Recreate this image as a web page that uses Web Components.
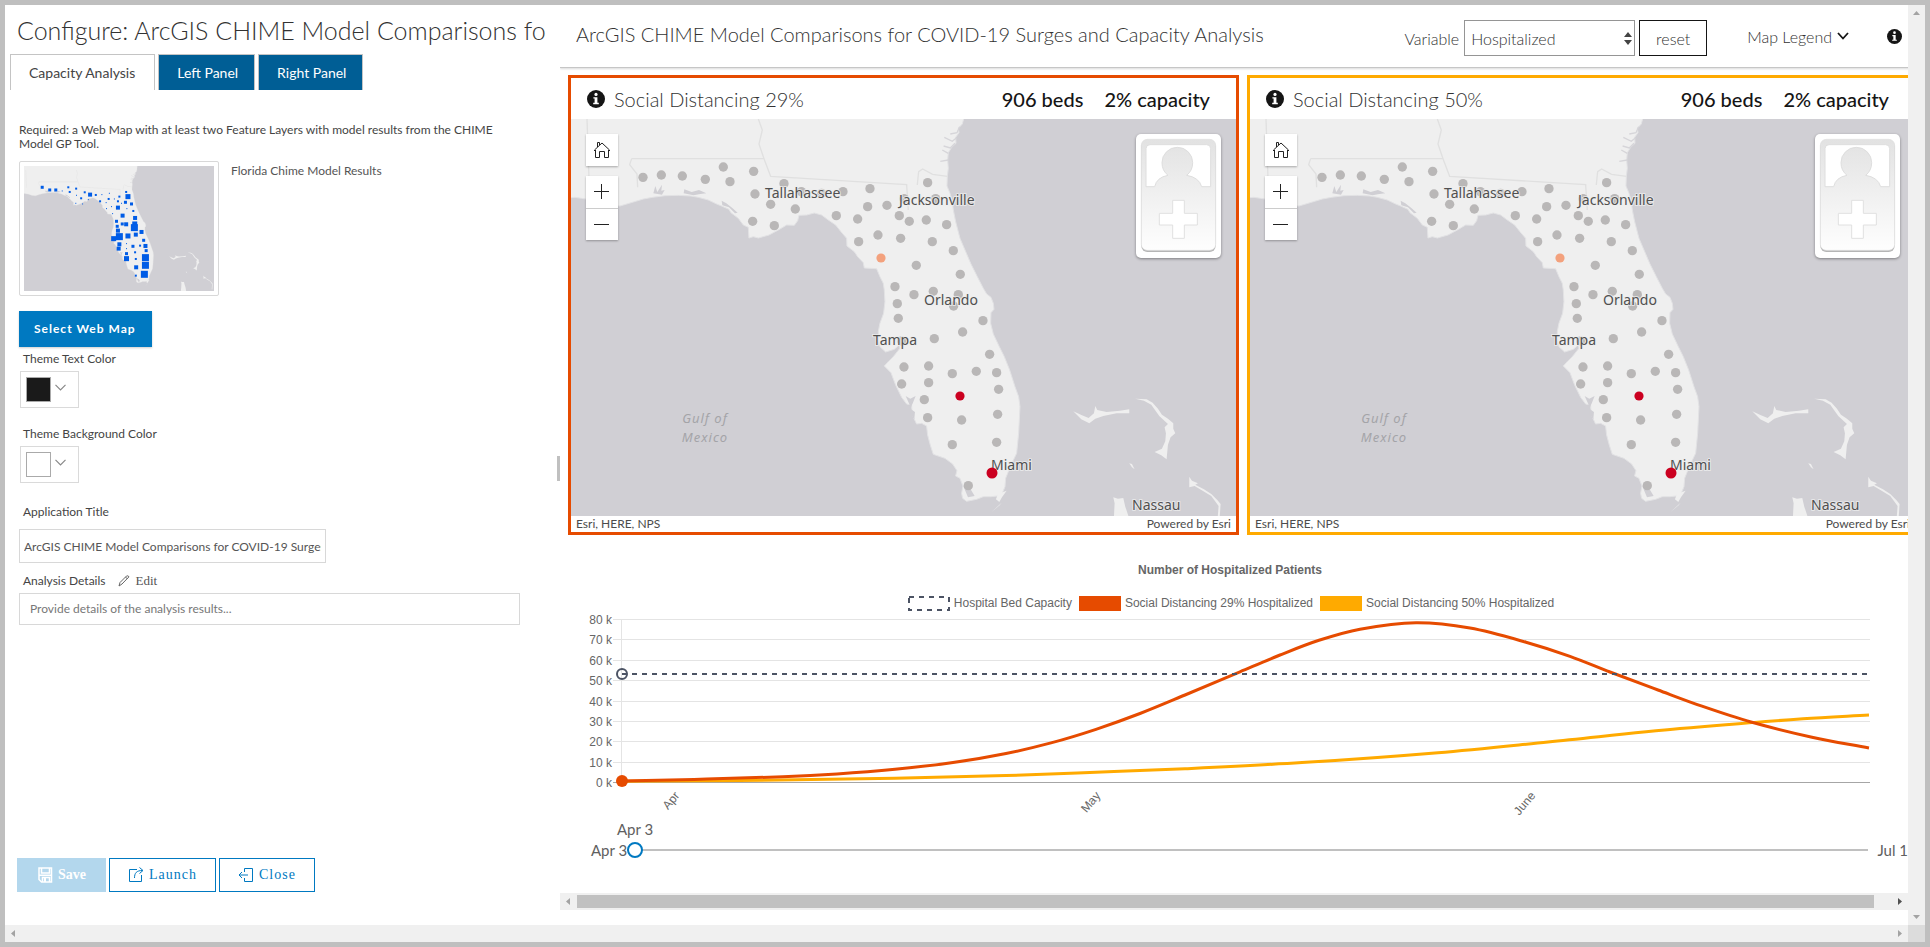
<!DOCTYPE html>
<html lang="en">
<head>
<meta charset="utf-8">
<title>Configure: ArcGIS CHIME Model Comparisons</title>
<style>
html, body { margin: 0; height: 100%; }
body { font-family: Lato, "Open Sans", sans-serif; font-size: 12px; color: #444; background: #bfbfbf; }
</style>
</head>
<body>
<app-window></app-window>
<script>
const define = (name, html, setup) => {
  const tpl = document.createElement('template');
  tpl.innerHTML = `<style>*{box-sizing:border-box}</style>${html}`;
  customElements.define(name, class extends HTMLElement {
    connectedCallback() {
      if (this.shadowRoot) return;
      this.attachShadow({ mode: 'open' }).append(tpl.content.cloneNode(true));
      if (setup) setup(this, this.shadowRoot);
    }
  });
};

/* ---------- small parts ---------- */
define('info-icon', `
<style>:host{display:inline-flex;width:18px;height:18px;color:#151515}svg{width:100%;height:100%}</style>
<svg viewBox="0 0 18 18" aria-hidden="true"><circle cx="9" cy="9" r="9" fill="currentColor"/>
<circle cx="9" cy="4.4" r="1.6" fill="#fff"/><path d="M6.4 7.2h4v5.6h1.4v1.4H6.2v-1.4h1.4V8.6H6.4z" fill="#fff"/></svg>`);

define('scroll-bar', `
<style>
:host{display:flex;align-items:center;justify-content:space-between;height:17px;background:#f0f0f0;color:#a3a3a3}
:host([vertical]){flex-direction:column;width:17px;height:auto}
svg{width:17px;height:17px;flex:none}
.track{flex:1;align-self:stretch;padding:2px 0}
.thumb{display:none;height:100%;width:calc(100% - 17px);background:#c1c1c1}
:host([thumb]) .thumb{display:block}
:host([thumb]) svg:last-of-type{color:#505050}
:host([vertical]) svg{transform:rotate(90deg)}
</style>
<svg viewBox="0 0 17 17"><path d="M10 5v7L6 8.500z" fill="currentColor"/></svg>
<div class="track"><div class="thumb"></div></div>
<svg viewBox="0 0 17 17"><path d="M7 5v7l4-3.500z" fill="currentColor"/></svg>`);

define('panel-tab', `
<style>
:host{display:block}
button{font:14px/18px Lato,sans-serif;height:36px;padding:0 16px 0 18px;border:1px solid #c4c4c4;border-bottom:0;background:#005e95;color:#fff}
:host([selected]) button{background:#fff;color:#444;padding-right:19px}
</style>
<button type="button" role="tab"><slot></slot></button>`);

define('color-field', `
<style>
:host{display:block}
label{display:block;line-height:16px;padding-left:4px}
button{display:flex;align-items:center;gap:4px;width:59px;height:37px;margin:4px 0 0 1px;padding:0 5px;border:1px solid #dadada;background:#fff}
.swatch{width:25px;height:25px;border:1px solid #aaa;background:var(--swatch)}
svg{width:11px;height:7px;margin-bottom:4px}
</style>
<label for="pick"><slot></slot></label>
<button id="pick" type="button"><span class="swatch"></span>
<svg viewBox="0 0 11 7"><path d="M.5.8l5 5 5-5" fill="none" stroke="#888" stroke-width="1.200"/></svg></button>`);

define('action-button', `
<style>
:host{display:block}
button{display:flex;align-items:center;gap:5px;height:34px;padding:0 18px;border:1px solid #0079c1;background:#fff;color:#0079c1;font:14px/18px "Liberation Serif",serif;letter-spacing:1px}
:host([disabled]) button{padding:0 19px;background:#b3d7ed;border-color:#b3d7ed;color:#fff;font-weight:bold;letter-spacing:0}
::slotted(svg){width:16px;height:16px}
</style>
<button type="button"><slot name="icon"></slot><span><slot></slot></span></button>`,
(host, root) => { root.querySelector('button').disabled = host.hasAttribute('disabled'); });

/* ---------- map ---------- */
const COAST = `M-60-80H1205L1200-20 1196 27 1192 42 1180 55 1182 68 1172 82 1173 100 1160 112 1150 128 1148 150 1150 175 1147 200 1146 228
1155 250 1162 275 1165 300 1172 335 1185 385 1200 420 1218 462 1237 500 1255 535 1265 552 1278 562 1285 580 1287 598 1278 608 1277 640
1285 672 1303 710 1318 740 1334 780 1350 830 1361 860 1365 890 1361 970 1355 1030 1338 1065 1322 1105 1320 1130 1312 1150 1298 1158
1278 1160 1255 1160 1235 1168 1205 1174 1193 1165 1190 1150 1194 1128 1185 1105 1172 1098 1176 1082 1163 1062 1140 1045 1105 1033
1096 1005 1088 975 1085 948 1070 940 1055 942 1042 915 1040 885 1025 882 1010 862 992 825 978 788 958 768 970 755 985 740 1005 715
1003 705 988 718 962 726 945 710 940 690 940 665 945 640 956 610 960 575 958 540 955 520 945 500 935 476 898 474 895 458 878 440
868 425 846 408 845 385 828 365 812 345 790 330 770 315 748 309 725 315 702 316 698 332 688 346 665 345 640 360 612 375 580 384
565 380 552 384 550 352 535 345 520 325 498 308 492 298 470 288 455 282 430 270 400 262 378 258 340 256 300 257 262 262 235 267
205 276 165 288 130 285 95 272 50 265 30 262-60 268z`;
const ISLANDS = `M760 904 786 916 806 924 822 910 826 888 832 900 860 906 900 902 928 898 928 910 890 910 850 918 826 926 808 940 784 928z
M946 866 980 868 998 878 1014 896 1026 914 1044 926 1060 940 1060 956 1066 970 1052 982 1044 1004 1040 1048 1024 1036 1004 1026 1026 1016
1036 994 1038 970 1034 952 1044 942 1018 918 994 884 972 872z M928 1060l8 2 8 16-8-6z
M1108 1100l8 12 18 8-8 4 26 14 22 14 18 18 10 12-4 60-6-2 4-52-22-30-26-16-24-14-16 4z
M880 1162l14 4 16-2 6 26 10 30 10 60h-60l6-60 2-40z M560 1142l-14 20-8 14-10-8 6-16z M545 1178l-30 28 24-20z`;
const INLETS = `M265 250l6-22 6 18 14-22-2 18 10-2-8 14zM358 238l22 8 22-6 22 10-18 2-20 4-30-6zM470 272l14 8 18 14 16 14-8 2-18-18-20-6z
M1022 858l14 8 16-8-8 20-8 18 14 10-2 22-10-14-4-30zM1195 1128l22 10 12 20-20 4z`;
const CREEKS = 'M1184 50l-8 18-20 4M1174 84l-12 10-24-12M1170 100l-14 14-20-6M1150 130l-18-10M1150 150l-24 4';
const BORDERS = 'M66 27 72 205M200 146H597L582 102 592 60 580 27M597 146 617 199 1025 224 1030 300M1057 225l4-40 12-8 30 16 45 6M200 146l-6 18 22 28 2 40';
const DOTS = [[234,202],[289,195],[352,198],[421,208],[475,171],[495,215],[566,184],[570,252],[617,283],[563,334],[628,347],[691,297],[657,221],[709,245],[770,250],[834,245],
[915,236],[908,290],[966,286],[814,317],[878,327],[881,395],[939,375],[1003,317],[1033,334],[1007,385],[1084,330],[1145,344],[1102,395],[1165,422],[1088,218],[1017,266],[1112,266],
[1054,466],[1186,493],[990,530],[1047,554],[1105,544],[1180,554],[1166,588],[997,581],[1000,625],[1254,632],[1193,666],[1108,686],[1010,693],[1274,733],[1017,771],[1091,768],[1162,791],
[1234,784],[1295,788],[1010,822],[1091,818],[1301,838],[1078,869],[1088,923],[1190,930],[1298,913],[1162,1004],[1295,997],[1210,1127]];
const SQUARES = [[118,562,3],[139,570,3],[156,570,3],[174,573,1],[191,562,2],[195,576,2],[213,566,2],[214,586,1],[227,595,2],[212,610,1],[231,612,1],[247,599,1],[237,577,2],[252,584,4],[268,585,2],
[285,584,1],[306,580,1],[304,597,2],[320,597,1],[280,604,2],[297,608,1],[298,626,1],[312,620,1],[330,604,2],[330,623,4],[340,610,1],[351,607,3],[368,612,3],[353,576,2],[358,590,5],[334,590,2],
[355,626,1],[373,633,2],[315,641,1],[343,647,4],[378,654,4],[326,664,3],[342,672,3],[353,673,4],[377,672,5],[376,683,7],[328,679,3],[330,692,4],[396,696,4],[380,704,4],[358,708,5],[334,710,7],[318,716,5],
[402,721,3],[334,733,4],[332,746,4],[354,731,1],[372,739,3],[392,737,2],[407,738,4],[354,746,1],[409,752,3],[354,761,3],[378,757,2],[354,776,5],[380,777,2],[407,773,7],[407,796,7],[381,802,4],
[404,823,7],[380,827,2]];
define('florida-map', `
<style>:host{display:block;background:#d0cfd4;overflow:hidden}svg{display:block;width:100%;height:100%}
text{font:14px "Noto Sans",sans-serif;fill:#505050;paint-order:stroke;stroke:#eee;stroke-width:2px;stroke-opacity:.8}
.sea{font-style:italic;font-size:13px;letter-spacing:1px;fill:#a4a4a8;stroke:none;text-anchor:middle}</style>
<svg viewBox="0 0 665 397" preserveAspectRatio="xMidYMid slice" role="img" aria-label="Map of Florida">
<g transform="translate(-6 -9) scale(.3333)">
<path d="${COAST}" fill="#efefef" stroke="#e3e3e5" stroke-width="3"/>
<path d="${INLETS}" fill="#d0cfd4"/><path d="${CREEKS}" fill="none" stroke="#d6d5d9" stroke-width="4"/>
<g transform="translate(765 0)"><path d="${ISLANDS}" fill="#efefef"/></g>
<path d="${BORDERS}" fill="none" stroke="#e0e0e0" stroke-width="4"/>
<g class="dots" fill="#b9b7b7"></g></g>
<g class="labels">
<text x="194" y="79">Tallahassee</text><text x="328" y="86">Jacksonville</text><text x="353" y="186">Orlando</text><text x="302" y="226">Tampa</text>
<text x="420" y="351">Miami</text><text x="561" y="391">Nassau</text>
<text class="sea" x="134" y="304">Gulf of</text><text class="sea" x="134" y="323">Mexico</text></g>
<g class="hot"><circle cx="310" cy="139" r="4.600" fill="#f3a17d"/><circle cx="389" cy="277" r="4.600" fill="#cb0020"/><circle cx="421" cy="354" r="5.500" fill="#cb0020"/></g>
</svg>`, (host, root) => {
  if (host.hasAttribute('thumbnail')) {
    root.querySelector('svg').setAttribute('viewBox', '10 -14 644 424');
    root.querySelector('.labels').remove();
    root.querySelector('.hot').innerHTML = SQUARES.map(([x, y, s]) => {
      const k = 3.39, cx = 10 + (x - 67) / 2.8 * k, cy = -14 + (y - 498) / 3 * k, w = s * k;
      return `<rect x="${cx - w / 2}" y="${cy - w / 2}" width="${w}" height="${w}" fill="#005ce6"/>`;
    }).join('');
  } else {
    root.querySelector('.dots').innerHTML = DOTS.map(([x, y]) => `<circle cx="${x}" cy="${y}" r="14"/>`).join('');
  }
});

define('map-controls', `
<style>
:host{display:flex;flex-direction:column;gap:10px}
div{display:grid;gap:1px;background:#ccc;box-shadow:0 1px 2px rgba(0,0,0,.3)}
button{display:block;width:32px;height:32px;padding:0;border:0;background:#fff}
div button:last-child:not(:first-child){height:31px}
svg{display:block;width:32px;height:32px;fill:none;stroke:#222}
</style>
<div><button type="button" aria-label="Home"><svg viewBox="0 0 32 32"><path d="M8.500 17v-1l7.500-7 7.500 7v1M9.500 16v7.500h4v-6h5v6h4V16M11.500 13V8.500h2v2.500"/></svg></button></div>
<div><button type="button" aria-label="Zoom in"><svg viewBox="0 0 32 32"><path d="M8 15.500h15M15.500 8v15"/></svg></button>
<button type="button" aria-label="Zoom out"><svg viewBox="0 0 32 32"><path d="M8 15.500h15"/></svg></button></div>`);

define('model-panel', `
<style>
:host{display:block;min-width:0;border:3px solid var(--accent);background:#fff}
header{display:flex;align-items:center;height:41px;padding:0 26px 0 16px}
info-icon{margin-right:9px}
h2{flex:1;margin:0;font:300 20px/24px Lato,sans-serif;color:#323232}
b{font:500 20px/24px Lato,sans-serif;color:#151515;margin-left:21px}
.map{position:relative;height:397px}
florida-map{height:100%}
map-controls{position:absolute;left:15px;top:15px}
.card{position:absolute;right:15px;top:15px;width:85px;height:124px;border-radius:5px;background:#fff;box-shadow:0 1px 3px rgba(0,0,0,.4)}
footer{display:flex;justify-content:space-between;height:16px;padding:0 5px;line-height:16px;color:#4c4c4c}
</style>
<header><info-icon></info-icon><h2><slot></slot></h2><b>906 beds</b><b>2% capacity</b></header>
<div class="map"><florida-map></florida-map><map-controls></map-controls>
<svg class="card" viewBox="0 0 255 372"><defs><linearGradient id="g" x2="0" y2="1"><stop stop-color="#e2e2e2"/><stop offset="1" stop-color="#fefefe"/></linearGradient></defs>
<rect x="16" y="20" width="223" height="334" rx="18" fill="#b5b5b5"/><rect x="16" y="16" width="223" height="333" rx="18" fill="url(#g)" stroke="#e0e0e0" stroke-width="2"/>
<path d="M30 158V44q0-12 12-12h170q12 0 12 12v114h-27q-8-28-45-34 18-14 18-38a46 46 0 0 0-92 0q0 24 18 38-34 6-40 34z" fill="#fff" stroke="#dedede" stroke-width="3"/>
<path d="M110 199h35v39h39v35h-39v40h-35v-40H70v-35h40z" fill="#fff" stroke="#e0e0e0" stroke-width="3"/></svg></div>
<footer><span>Esri, HERE, NPS</span><span>Powered by Esri</span></footer>`);

/* ---------- chart ---------- */
const HIGH = [[62,171],[134,169.4],[223,166.8],[277,164],[335,159.3],[393,152.6],[446,143.5],[491,132.9],[536,119.3],[580,103.5],[625,85],[680,61.8],[720,45],[759,30.3],[800,19.2],[856,12.8],[910,18.1],[966,32.2],[1010,46.3],[1050,62],[1098,80],[1142,96.2],[1191,112],[1252,127.2],[1309,138]];
const LOW = [[62,171.3],[179,170.6],[335,168.3],[446,165.6],[536,162.3],[625,158.7],[742,152.6],[878,142.7],[988,132],[1120,118.6],[1243,108.8],[1309,105]];
/* Smooth curve through the points, with each slope taken from the two neighbours. */
const spline = p => {
  const m = p.map((_, i) => {
    const a = p[Math.max(i - 1, 0)], b = p[Math.min(i + 1, p.length - 1)];
    return (b[1] - a[1]) / (b[0] - a[0]);
  });
  return p.slice(1).reduce((d, b, i) => {
    const a = p[i], h = (b[0] - a[0]) / 3;
    return d + `C${a[0] + h} ${a[1] + m[i] * h} ${b[0] - h} ${b[1] - m[i + 1] * h} ${b[0]} ${b[1]}`;
  }, `M${p[0]}`);
};
const ROWS = [9.5, 29.5, 50.5, 70.5, 91.5, 111.5, 131.5, 152.5, 172.5];
define('patients-chart', `
<style>
:host{display:block;font:12px/16px "Liberation Sans",sans-serif;color:#666}
h3{margin:0;padding:27px 26px 0 0;text-align:center;font:bold 12px/16px "Liberation Sans",sans-serif}
ul{display:flex;justify-content:center;gap:7px;margin:17px 0 0;padding:0 24px 0 0;list-style:none}
li{display:flex;align-items:center;gap:4px}
i{display:block;width:42px;height:15px;background:var(--c)}
li svg{width:42px;height:15px}
.plot{display:block;width:100%;height:auto;margin-top:-1px}
text{font:12px "Liberation Sans",sans-serif;fill:#666}
</style>
<h3>Number of Hospitalized Patients</h3>
<ul><li><svg viewBox="0 0 42 15"><rect x="1" y="1" width="40" height="13" fill="none" stroke="#4c5364" stroke-width="2" stroke-dasharray="5 5"/></svg>Hospital Bed Capacity</li>
<li style="--c:#e64b00"><i></i>Social Distancing 29% Hospitalized</li><li style="--c:#ffaa00"><i></i>Social Distancing 50% Hospitalized</li></ul>
<svg class="plot" viewBox="0 0 1366 212">
<g>${ROWS.map((y, i) => `<path d="M53 ${y}H1310" stroke="${i === 8 ? '#a6a6a6' : '#e4e4e4'}"/><text x="52" y="${y + 4}" text-anchor="end">${80 - i * 10} k</text>`).join('')}</g>
<path d="M61.500 9V173" stroke="#e4e4e4"/>
<g fill="none" stroke-width="3"><path d="${spline(LOW)}" stroke="#ffaa00"/><path d="${spline(HIGH)}" stroke="#e64b00"/>
<path d="M62 64H1310" stroke="#4c5364" stroke-width="2" stroke-dasharray="5 5"/><circle cx="62" cy="64" r="5" stroke="#4c5364" stroke-width="2"/></g>
<circle cx="62" cy="171" r="6" fill="#e64b00"/>
<g text-anchor="end"><text transform="translate(120 186) rotate(-50)">Apr</text><text transform="translate(541 186) rotate(-50)">May</text><text transform="translate(976 186) rotate(-50)">June</text></g>
</svg>`);

define('date-slider', `
<style>
:host{display:grid;grid-template-columns:auto 1fr auto;align-items:center;row-gap:4px;padding:0 18px 0 31px;font-size:15px;line-height:20px;color:#606060}
output{grid-column:1/-1;padding-left:26px;line-height:14px}
input{appearance:none;width:100%;height:16px;margin:0;background:linear-gradient(#c0c0c0,#c0c0c0) center/100% 2px no-repeat}
input::-webkit-slider-thumb{appearance:none;width:16px;height:16px;border:2px solid #0079c1;border-radius:50%;background:#fff}
.end{padding-left:9px}
</style>
<output for="day">Apr 3</output>
<label for="day">Apr 3</label><input id="day" type="range" min="0" max="89" value="0"><span class="end">Jul 1</span>`);

/* ---------- right-hand application preview ---------- */
define('app-preview', `
<style>
:host{display:flex;flex-direction:column;min-width:0;overflow:hidden;padding-bottom:15px}
.view{flex:1;overflow:hidden}
.page{width:calc(100% + 18px)}
header{display:flex;align-items:center;height:63px;padding:0 24px 0 16px;border-bottom:1px solid #c6c6c6;box-shadow:0 1px 2px rgba(0,0,0,.15);color:#323232;font-size:16px;font-weight:300}
h1{flex:1;margin:0;padding-bottom:4px;font:300 20px/24px Lato,sans-serif;color:#323232}
.pick{display:grid;align-items:center;margin:4px 4px 0 5px}
.pick>*{grid-area:1/1}
.var{margin-top:4px}
select{appearance:none;width:171px;height:36px;padding:0 6px;border:1px solid #959595;border-radius:0;background:#fff;color:#323232;font:inherit}
.pick svg{width:8px;height:13px;justify-self:end;margin-right:3px;pointer-events:none}
button{font:inherit;color:inherit}
.reset{width:68px;height:36px;margin:4px 40px 0 0;padding:0;border:1px solid #151515;background:#fff}
.legend{display:flex;align-items:center;gap:5px;margin-right:36px;padding:0 2px 0 0;border:0;background:none;font-size:16px}
.legend svg{width:12px;height:8px}
header info-icon{width:15px;height:15px}
.maps{display:grid;grid-template-columns:1fr 1fr;gap:8px;padding:7px 8px 0}
</style>
<div class="view"><div class="page">
<header><h1>ArcGIS CHIME Model Comparisons for COVID-19 Surges and Capacity Analysis</h1>
<label class="var" for="variable">Variable</label>
<div class="pick"><select id="variable"><option>Hospitalized</option></select>
<svg viewBox="0 0 8 13"><path d="M4 0l4 5H0zM4 13l4-5H0z" fill="#444"/></svg></div>
<button class="reset" type="button">reset</button>
<button class="legend" type="button">Map Legend <svg viewBox="0 0 12 8"><path d="M1 1l5 5.500L11 1" fill="none" stroke="#151515" stroke-width="1.800"/></svg></button>
<info-icon></info-icon></header>
<div class="maps"><model-panel style="--accent:#e64b00">Social Distancing 29%</model-panel><model-panel style="--accent:#ffaa00">Social Distancing 50%</model-panel></div>
<patients-chart></patients-chart><date-slider></date-slider>
</div></div>
<scroll-bar thumb></scroll-bar>`);

/* ---------- left-hand configuration ---------- */
define('config-panel', `
<style>
:host{display:flex;flex-direction:column;position:relative;min-width:0;overflow:hidden}
h1{margin:0;padding:10px 0 0 12px;font:300 25px/30px Lato,sans-serif;color:#323232;white-space:nowrap}
nav{display:flex;gap:3px;padding:9px 0 0 5px}
main{flex:1;padding:33px 40px 0 14px}
p{margin:0;line-height:14px}
.webmap{display:flex;gap:12px;margin:10px 0 15px}
.frame{padding:4px;border:1px solid #d8d8d8;border-radius:2px}
florida-map{width:190px;height:125px}
.webmap span{padding-top:2px;line-height:16px;color:#555}
.select{height:36px;padding:0 16px 0 15px;border:0;background:#0079c1;color:#fff;font:bold 12px/16px Lato,sans-serif;letter-spacing:1px;box-shadow:0 1px 2px rgba(0,0,0,.2)}
color-field{margin-top:4px}
color-field+color-field{margin-top:18px}
label{display:block;line-height:16px;padding-left:4px}
input,textarea{display:block;border:1px solid #d8d8d8;font:12px/16px Lato,sans-serif;color:#555;outline:0}
.title{margin-top:21px}
input{width:307px;height:34px;margin-top:9px;padding:0 4px}
.row{display:flex;align-items:center;gap:12px;margin-top:10px}
.row button{display:flex;align-items:center;gap:6px;padding:0;border:0;background:none;color:#555;font:13px/16px "Liberation Serif",serif}
.row svg{width:12px;height:12px}
textarea{width:100%;height:32px;margin-top:4px;padding:7px 10px;resize:none;overflow:hidden}
textarea::placeholder{color:#777}
footer{display:flex;gap:3px;padding:0 0 33px 12px}
.grip{position:absolute;right:0;top:49%;width:3px;height:25px;background:#c0c0c0}
</style>
<h1>Configure: ArcGIS CHIME Model Comparisons fo</h1>
<nav role="tablist"><panel-tab selected>Capacity Analysis</panel-tab><panel-tab>Left Panel</panel-tab><panel-tab>Right Panel</panel-tab></nav>
<main>
<p>Required: a Web Map with at least two Feature Layers with model results from the CHIME Model GP Tool.</p>
<div class="webmap"><div class="frame"><florida-map thumbnail></florida-map></div><span>Florida Chime Model Results</span></div>
<button class="select" type="button">Select Web Map</button>
<color-field style="--swatch:#1a1a1a">Theme Text Color</color-field>
<color-field style="--swatch:#fff">Theme Background Color</color-field>
<label class="title" for="title">Application Title</label>
<input id="title" type="text" value="ArcGIS CHIME Model Comparisons for COVID-19 Surges and Capacity Analysis">
<div class="row"><label for="details">Analysis Details</label>
<button type="button"><svg viewBox="0 0 12 12"><path d="M1 11l1-3.500 6.500-6.500q1.500-.8 2.500.8l-7 7.200zM7.500 2l2 2" fill="none" stroke="#666"/></svg>Edit</button></div>
<textarea id="details" placeholder="Provide details of the analysis results..."></textarea>
</main>
<footer>
<action-button disabled><svg slot="icon" viewBox="0 0 16 16"><path d="M2 1h12.500v14H4.500L2 12.500zM4.500 1v5h8V1M5.500 15v-4.500h7V15M2 8.200h12.500" fill="none" stroke="#fff" stroke-width="1.500"/><path d="M7 11h2v4H7z" fill="#fff"/></svg>Save</action-button>
<action-button><svg slot="icon" viewBox="0 0 16 16"><path d="M9 2.500H1.500v12h12V8M6.500 11c0-5 2-7.500 8-7.500M11.500.5l3.500 3-3.500 3" fill="none" stroke="#0079c1"/></svg>Launch</action-button>
<action-button><svg slot="icon" viewBox="0 0 16 16"><path d="M6.500 5V1.500h8v13h-8V11M10 8H1M4 5L1 8l3 3" fill="none" stroke="#0079c1"/></svg>Close</action-button>
</footer><div class="grip"></div>`);

define('app-window', `
<style>
:host{display:grid;grid-template:minmax(0,1fr) 17px/minmax(0,555fr) minmax(0,1348fr) 17px;height:100vh;border:5px solid #bfbfbf;background:#fff;box-sizing:border-box}
.bottom{grid-column:1/3}
.corner{background:#dcdcdc}
</style>
<config-panel></config-panel><app-preview></app-preview><scroll-bar vertical></scroll-bar>
<scroll-bar class="bottom"></scroll-bar><div class="corner"></div>`);
</script>
</body>
</html>
